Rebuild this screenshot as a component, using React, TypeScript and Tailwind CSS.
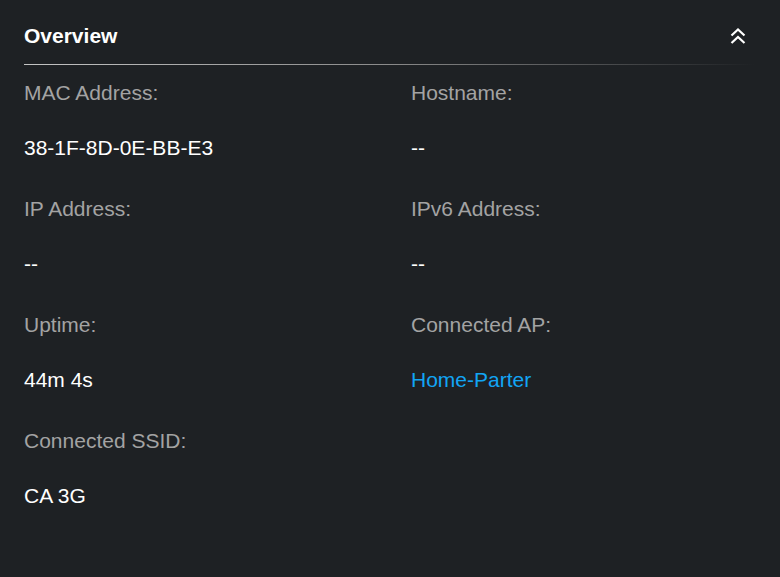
const fields: { label: string; value: string; link?: boolean }[] = [
  { label: 'MAC Address:', value: '38-1F-8D-0E-BB-E3' },
  { label: 'Hostname:', value: '--' },
  { label: 'IP Address:', value: '--' },
  { label: 'IPv6 Address:', value: '--' },
  { label: 'Uptime:', value: '44m 4s' },
  { label: 'Connected AP:', value: 'Home-Parter', link: true },
  { label: 'Connected SSID:', value: 'CA 3G' },
];

function CollapseIcon() {
  return (
    <svg width="16" height="16" viewBox="0 0 16 16" fill="none" stroke="#ffffff" strokeWidth="2.2" strokeLinecap="butt" strokeLinejoin="miter">
      <path d="M1.5 7.5 L8 1.5 L14.5 7.5" />
      <path d="M1.5 15 L8 9 L14.5 15" />
    </svg>
  );
}

export default function App() {
  return (
    <div className="w-[780px] h-[577px] bg-[#1e2124] px-6 font-['Liberation_Sans',Arial,sans-serif]">
      {/* header */}
      <div className="flex items-center justify-between pt-6 pb-4">
        <h2 className="text-[21px] leading-6 font-bold text-white">Overview</h2>
        <button className="mr-[10px] text-white">
          <CollapseIcon />
        </button>
      </div>
      <div className="h-px w-[731px] bg-gradient-to-r from-[#c4c4c4] via-[#8a8a8a] to-transparent" />

      {/* fields */}
      <div className="grid grid-cols-[387px_1fr] gap-y-[37px] pt-4">
        {fields.map((f) => (
          <div key={f.label} className="flex flex-col gap-[31px]">
            <div className="text-[21px] leading-6 text-[#a3a3a3]">{f.label}</div>
            <div className={`text-[21px] leading-6 ${f.link ? 'text-[#12a5f4]' : 'text-white'}`}>
              {f.value}
            </div>
          </div>
        ))}
      </div>
    </div>
  );
}
